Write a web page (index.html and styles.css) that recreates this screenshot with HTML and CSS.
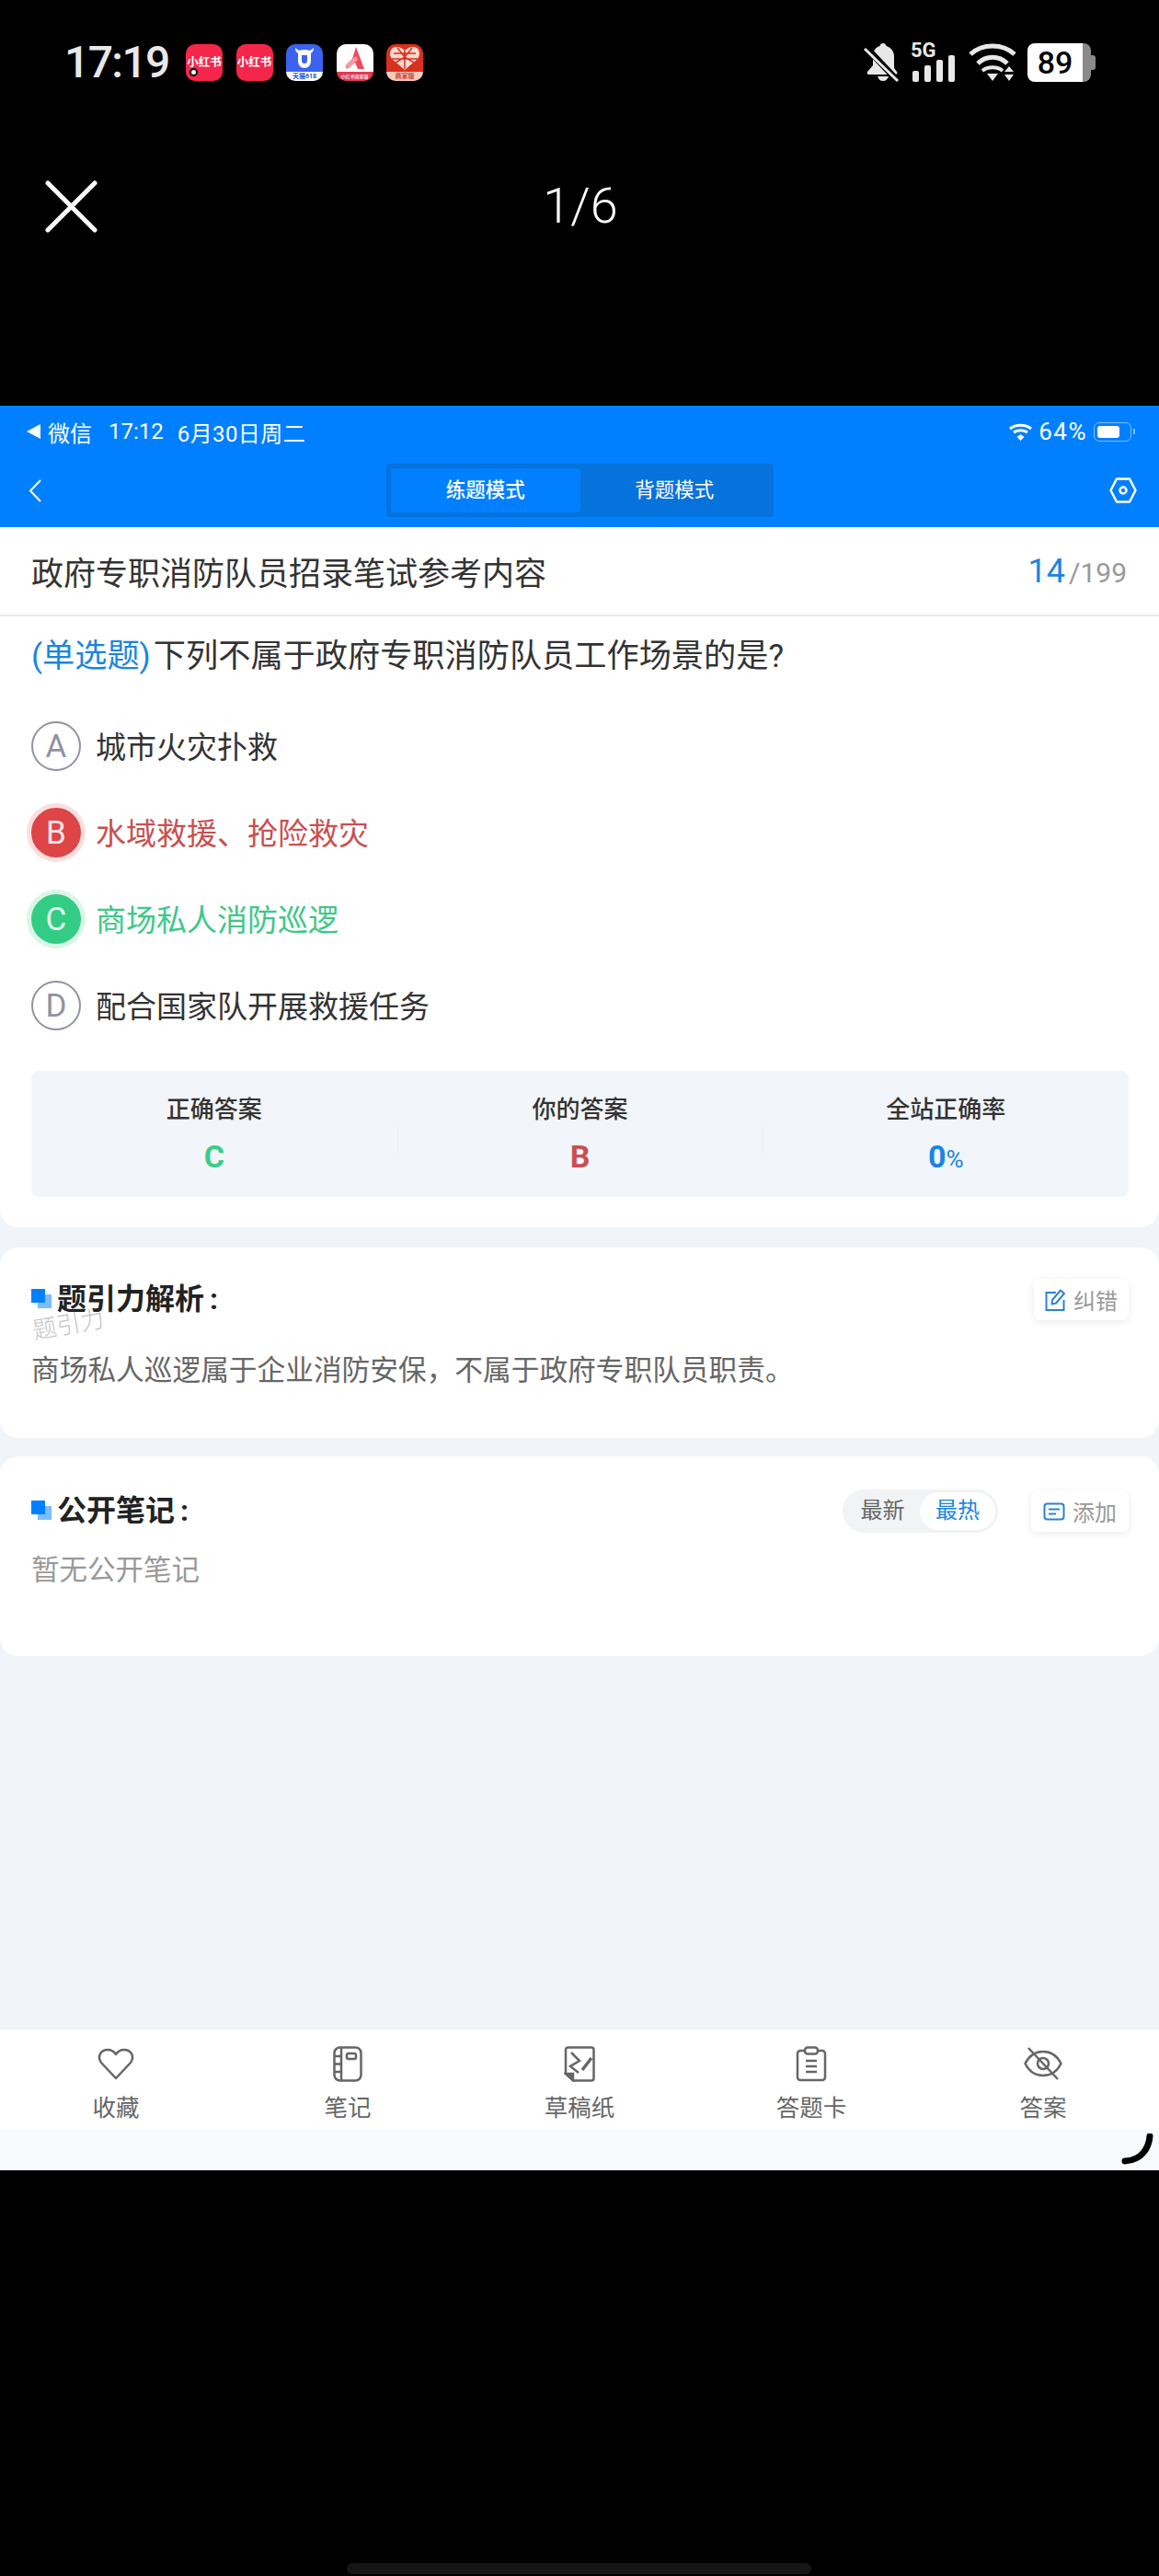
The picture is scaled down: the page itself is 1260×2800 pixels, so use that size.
FILE: index.html
```html
<!DOCTYPE html>
<html lang="zh-CN">
<head>
    <meta charset="UTF-8">
    <title>题引力</title>
    <link rel="stylesheet" href="styles.css">
</head>
<body>
    <div class="phone-status">
        <span class="phone-time">17:19</span>
        <div class="app-icons">
            <div class="app app-red"><span>小红书</span><i class="app-dot"></i></div>
            <div class="app app-red"><span>小红书</span></div>
            <div class="app app-blue">
                <svg width="40" height="30" viewBox="0 0 40 30"><path d="M10 4c0 4 2 5 3 6v8c0 5 3 8 7 8s7-3 7-8v-8c1-1 3-2 3-6-2 2-4 3-5 3-1-1-3-1-5-1s-4 0-5 1c-1 0-3-1-5-3z" fill="#fff"/><path d="M17 12h6v6c0 2-1 3-3 3s-3-1-3-3z" fill="#3b63f0"/></svg>
                <span>天猫618</span>
            </div>
            <div class="app app-white">
                <svg width="40" height="30" viewBox="0 0 40 30"><path d="M21 3l9 24h-7l-3-7-7 6c-2 1-4 0-3-3l7-7z" fill="#ef4a5c"/><path d="M10 22l11-9 2 4-9 8c-3 2-5 0-4-3z" fill="#f79aa2"/></svg>
                <span>小红书商家版</span>
            </div>
            <div class="app app-pdd">
                <svg width="40" height="30" viewBox="0 0 40 30"><path d="M20 28L6 16C2 11 4 3 11 3c4 0 7 2 9 4 2-2 5-4 9-4 7 0 9 8 5 13z" fill="#f9d9d2"/><path d="M20 7v20M8 10l24 0M6 16h28M12 4l8 10 8-10M10 20l10-6 10 6" stroke="#d8311c" stroke-width="1.5" fill="none"/></svg>
                <span>商家版</span>
            </div>
        </div>
        <div class="status-right">
            <svg class="icon-bell" width="39" height="42" viewBox="0 0 39 42">
                <path d="M21 0c-2 0-3 1-3.500 3C12 5 10 9 10 14v10l-6 7c-1 2 0 3 2 3h28c2 0 3-1 2-3l-3-4V14c0-5-3-9-8.500-11C24 1 23 0 21 0z" fill="#e8e8e8"/>
                <path d="M15 36h12c-1 3-3 5-6 5s-5-2-6-5z" fill="#e8e8e8"/>
                <path d="M2 4l35 37" stroke="#000" stroke-width="7"/>
                <path d="M1 6l36 35" stroke="#e8e8e8" stroke-width="3"/>
            </svg>
            <div class="signal">
                <span class="label-5g">5G</span>
                <svg width="50" height="29" viewBox="0 0 50 29">
                    <rect x="2" y="17" width="7" height="12" rx="2" fill="#e8e8e8"/>
                    <rect x="15" y="11" width="7" height="18" rx="2" fill="#e8e8e8"/>
                    <rect x="28" y="5" width="7" height="24" rx="2" fill="#e8e8e8"/>
                    <rect x="41" y="0" width="7" height="29" rx="2" fill="#e8e8e8"/>
                </svg>
            </div>
            <svg class="icon-wifi" width="53" height="42" viewBox="0 0 53 42" fill="none" stroke="#e8e8e8" stroke-width="5">
                <path d="M2 12C15 0 37 0 50 12"/>
                <path d="M10 22C19 13 33 13 42 22"/>
                <path d="M15 30c6-5 16-5 22 0" stroke-width="4"/>
                <path d="M20 33h12l-6 8z" fill="#e8e8e8" stroke="none"/>
                <path d="M44 25l5 6H39zM39 34h10l-5 7z" fill="#e8e8e8" stroke="none"/>
            </svg>
            <div class="batt">89</div>
        </div>
    </div>

    <div class="viewer-top">
        <svg width="57" height="57" viewBox="0 0 57 57"><path d="M3 3l51 51M54 3L3 54" stroke="#fff" stroke-width="5" stroke-linecap="round"/></svg>
        <span class="viewer-count">1/6</span>
        <span></span>
    </div>

    <div class="shot">
        <div class="shot-head">
            <div class="shot-status">
                <div class="shot-status-left">
                    <span class="back-tri"></span><span>微信</span><span class="ml-time">17:12</span><span class="ml-date">6月30日周二</span>
                </div>
                <div class="shot-status-right">
                    <svg width="25" height="20" viewBox="0 0 25 20" fill="none" stroke="#fff" stroke-width="3"><path d="M1 7c6-5 17-5 23 0"/><path d="M5 11c4-3 11-3 15 0"/><path d="M8.500 16l4-3 4 3-4 4z" fill="#fff" stroke="none"/></svg>
                    <span class="wifi-pct">64%</span>
                    <div class="mini-batt"><i></i></div>
                </div>
            </div>
            <div class="shot-nav">
                <svg width="15" height="25" viewBox="0 0 15 25"><path d="M13 1L2 12.500 13 24" stroke="#fff" stroke-width="2" fill="none"/></svg>
                <div class="mode-tabs">
                    <div class="mode-tab active">练题模式</div>
                    <div class="mode-tab">背题模式</div>
                </div>
                <svg width="30" height="28" viewBox="0 0 30 28" fill="none" stroke="#fff" stroke-width="2.500"><path d="M8 1.500h14L28.500 14 22 26.500H8L1.500 14z" stroke-linejoin="round"/><circle cx="15" cy="14" r="3.500"/></svg>
            </div>
        </div>

        <div class="title-row">
            <span class="paper-title">政府专职消防队员招录笔试参考内容</span>
            <span class="progress"><b>14</b>/199</span>
        </div>

        <div class="question-card">
            <p class="question"><span class="q-type">(单选题)</span>下列不属于政府专职消防队员工作场景的是?</p>
            <div class="option"><span class="opt-mark">A</span>城市火灾扑救</div>
            <div class="option wrong"><span class="opt-mark">B</span>水域救援、抢险救灾</div>
            <div class="option right"><span class="opt-mark">C</span>商场私人消防巡逻</div>
            <div class="option"><span class="opt-mark">D</span>配合国家队开展救援任务</div>
            <div class="stats">
                <div class="stat"><div class="stat-label">正确答案</div><div class="stat-value green">C</div></div>
                <div class="stat"><div class="stat-label">你的答案</div><div class="stat-value red">B</div></div>
                <div class="stat"><div class="stat-label">全站正确率</div><div class="stat-value blue">0<small>%</small></div></div>
            </div>
        </div>

        <div class="panel panel-analysis">
            <div class="panel-head">
                <h3 class="panel-title"><i class="mark"></i>题引力解析<span class="colon">:</span></h3>
                <div class="small-btn">
                    <svg width="23" height="24" viewBox="0 0 23 24" fill="none" stroke="#2b84d0" stroke-width="2"><path d="M12 4H1.500v19h19V12"/><path d="M8 12l9-10.500 4 3.500-9 10.500-4.500 1z" stroke-linejoin="round"/></svg>
                    <span>纠错</span>
                </div>
            </div>
            <span class="watermark">题引力</span>
            <p class="panel-text">商场私人巡逻属于企业消防安保，不属于政府专职队员职责。</p>
        </div>

        <div class="panel panel-notes">
            <div class="panel-head">
                <h3 class="panel-title"><i class="mark"></i>公开笔记<span class="colon">:</span></h3>
                <div class="head-right">
                    <div class="sort-toggle">
                        <span class="sort-item">最新</span>
                        <span class="sort-item active">最热</span>
                    </div>
                    <div class="small-btn">
                        <svg width="24" height="20" viewBox="0 0 24 20" fill="none" stroke="#2b84d0" stroke-width="2"><rect x="1.500" y="1.500" width="21" height="17" rx="3"/><path d="M6 7.500h12M6 12.500h8"/></svg>
                        <span>添加</span>
                    </div>
                </div>
            </div>
            <p class="panel-text empty">暂无公开笔记</p>
        </div>

        <div class="spacer"></div>

        <div class="tabbar">
            <div class="tab-item">
                <div class="tab-icon"><svg width="40" height="35" viewBox="0 0 40 35" fill="none" stroke="#666" stroke-width="2.500"><path d="M20 33L4 16C-1 9 4 2 11 2c4 0 7 2 9 5 2-3 5-5 9-5 7 0 12 7 7 14z" stroke-linejoin="round"/></svg></div>
                <span>收藏</span>
            </div>
            <div class="tab-item">
                <div class="tab-icon"><svg width="32" height="39" viewBox="0 0 32 39" fill="none" stroke="#666" stroke-width="2.500"><rect x="1.500" y="1.500" width="29" height="36" rx="6"/><path d="M9 1.500v36M1.500 11H9M1.500 19.500H9M1.500 28H9"/><rect x="15" y="8" width="10" height="6" rx="2"/></svg></div>
                <span>笔记</span>
            </div>
            <div class="tab-item">
                <div class="tab-icon"><svg width="34" height="39" viewBox="0 0 34 39" fill="none" stroke="#666" stroke-width="2.500"><path d="M5 1.500h25a2.500 2.500 0 0 1 2.500 2.500v31a2.500 2.500 0 0 1-2.500 2.500H10l-8-7.500V4a2.500 2.500 0 0 1 3-2.500z"/><path d="M8 7l9 9-10 6 9 7"/><path d="M30 13L20 26" stroke-width="3.500"/><path d="M2 30h8v7z" fill="#666"/></svg></div>
                <span>草稿纸</span>
            </div>
            <div class="tab-item">
                <div class="tab-icon"><svg width="34" height="39" viewBox="0 0 34 39" fill="none" stroke="#666" stroke-width="2.500"><path d="M9 5H5a3 3 0 0 0-3 3v26a3 3 0 0 0 3 3h24a3 3 0 0 0 3-3V8a3 3 0 0 0-3-3h-4"/><rect x="10" y="1.500" width="14" height="7" rx="3"/><path d="M11 16h12M11 22h12M11 28h12"/></svg></div>
                <span>答题卡</span>
            </div>
            <div class="tab-item">
                <div class="tab-icon"><svg width="42" height="36" viewBox="0 0 42 36" fill="none" stroke="#666" stroke-width="2.500"><path d="M1.500 18C6 9 13 5 21 5s15 4 19.500 13C36 27 29 31 21 31S6 27 1.500 18z" stroke-linejoin="round"/><circle cx="21" cy="18" r="6"/><path d="M5 1l32 34"/></svg></div>
                <span>答案</span>
            </div>
        </div>
        <div class="home-strip">
            <svg class="pen-mark" width="36" height="34" viewBox="0 0 36 34"><path d="M31 3c-1 12-8 26-27 27" fill="none" stroke="#000" stroke-width="7" stroke-linecap="round"/></svg>
        </div>
    </div>

    <div class="home-indicator"></div>
</body>
</html>
```

FILE: styles.css
```css
* {
    box-sizing: border-box;
}

body {
    margin: 0;
    height: 2800px;
    overflow: hidden;
    background-color: #000;
    font-family: Roboto, "Noto Sans CJK SC", sans-serif;
}

p, h3 {
    margin: 0;
}

/* phone status bar */
.phone-status {
    height: 140px;
    padding: 47px 0 0 70px;
    display: flex;
    align-items: flex-start;
    color: #e8e8e8;
}

.phone-time {
    width: 132px;
    font-size: 48px;
    line-height: 42px;
    font-weight: 500;
    letter-spacing: -1.6px;
}

.app-icons {
    display: flex;
    gap: 14.500px;
    margin-top: 1px;
}

.app {
    position: relative;
    width: 40px;
    height: 40px;
    border-radius: 10px;
    overflow: hidden;
    display: flex;
    flex-direction: column;
    align-items: center;
    font-weight: 700;
}

.app svg {
    display: block;
    flex: none;
}

.app span {
    font-size: 7px;
    line-height: 10px;
    white-space: nowrap;
}

.app-red {
    background-color: #f5264a;
    color: #fff;
    justify-content: center;
}

.app-red span {
    font-size: 12.500px;
    line-height: 14px;
}

.app-dot {
    position: absolute;
    left: 4px;
    bottom: 5px;
    width: 9px;
    height: 9px;
    border-radius: 50%;
    background-color: #fff;
    border: 2.500px solid #111;
}

.app-blue {
    background: linear-gradient(#3b63f0 30px, #fff 30px);
    color: #2a50d8;
}

.app-white {
    background: linear-gradient(#fff 30px, #e03a4e 30px);
    color: #fde;
}

.app-white span {
    font-size: 5px;
}

.app-pdd {
    background: linear-gradient(#d8311c 30px, #f9c9bd 30px);
    color: #c8402c;
}

.status-right {
    position: absolute;
    top: 47px;
    left: 939px;
    display: flex;
    align-items: flex-start;
}

.icon-bell {
    margin-right: 12px;
}

.signal {
    width: 50px;
    height: 42px;
    margin-right: 13px;
    display: flex;
    flex-direction: column;
}

.signal svg {
    display: block;
    margin-top: -3px;
}

.label-5g {
    height: 16px;
    font-size: 22px;
    font-weight: 700;
    line-height: 16px;
    color: #e8e8e8;
}

.icon-wifi {
    margin-right: 11px;
}

.batt {
    position: relative;
    width: 69px;
    height: 42px;
    padding-right: 9px;
    border-radius: 8px;
    background: linear-gradient(90deg, #fff 60px, #8a8a8a 60px);
    color: #000;
    font-size: 34px;
    font-weight: 500;
    line-height: 42px;
    text-align: center;
}

.batt::after {
    content: "";
    position: absolute;
    right: -5px;
    top: 13px;
    width: 5px;
    height: 16px;
    border-radius: 0 3px 3px 0;
    background-color: #8a8a8a;
}

/* photo viewer top */
.viewer-top {
    height: 301px;
    padding: 56px 49px 0;
    display: grid;
    grid-template-columns: 1fr auto 1fr;
    align-items: start;
}

.viewer-count {
    margin-top: -5px;
    margin-left: 2px;
    color: #fff;
    font-size: 54px;
    font-weight: 300;
    line-height: 66px;
}

/* screenshot */
.shot {
    height: 1918px;
    display: flex;
    flex-direction: column;
    background-color: #f1f5f9;
    color: #333;
}

.shot-head {
    height: 132px;
    background-color: #0080ff;
    color: #fff;
}

.shot-status {
    height: 56px;
    padding: 0 30px 0 29px;
    display: flex;
    justify-content: space-between;
    align-items: center;
    font-size: 24px;
}

.shot-status-left,
.shot-status-right {
    display: flex;
    align-items: center;
}

.back-tri {
    width: 0;
    height: 0;
    margin-right: 8px;
    border-top: 8px solid transparent;
    border-bottom: 8px solid transparent;
    border-right: 15px solid #fff;
}

.ml-time {
    margin-left: 18px;
}

.ml-date {
    margin-left: 15px;
    letter-spacing: 0.4px;
}

.shot-status-right svg {
    margin-right: 7px;
}

.wifi-pct {
    font-size: 26px;
    letter-spacing: 1.500px;
}

.mini-batt {
    position: relative;
    width: 41px;
    height: 21px;
    margin-left: 7px;
    padding: 3px;
    border: 1.500px solid #7dbcff;
    border-radius: 6px;
}

.mini-batt::after {
    content: "";
    position: absolute;
    right: -5px;
    top: 6px;
    width: 2px;
    height: 6px;
    background-color: #7dbcff;
}

.mini-batt i {
    display: block;
    width: 24px;
    height: 100%;
    border-radius: 3px;
    background-color: #fff;
}

.shot-nav {
    height: 76px;
    padding: 0 24px 4px 31px;
    display: flex;
    justify-content: space-between;
    align-items: center;
}

.mode-tabs {
    width: 421px;
    height: 58px;
    margin-left: 9px;
    padding: 5px;
    display: flex;
    border-radius: 4px;
    background-color: #0672dc;
}

.mode-tab {
    flex: 1;
    border-radius: 4px;
    font-size: 21.500px;
    line-height: 48px;
    text-align: center;
}

.mode-tab.active {
    background-color: #0080ff;
    font-weight: 500;
}

.title-row {
    height: 97px;
    padding: 0 35px 0 34px;
    display: flex;
    justify-content: space-between;
    align-items: center;
    background-color: #fff;
    border-bottom: 2px solid #e9e9e9;
}

.paper-title {
    font-size: 35px;
    color: #333;
}

.progress {
    font-size: 30px;
    color: #999;
}

.progress b {
    margin-right: 4px;
    font-size: 36px;
    font-weight: 400;
    color: #1a85e0;
}

.question-card {
    padding: 21px 33px 33px 34px;
    background-color: #fff;
    border-radius: 0 0 20px 20px;
}

.question {
    margin-bottom: 29px;
    font-size: 35.200px;
    line-height: 44px;
    color: #333;
}

.q-type {
    margin-right: 3px;
    color: #1a85e0;
}

.option {
    height: 94px;
    padding-bottom: 3px;
    display: flex;
    align-items: center;
    font-size: 33px;
    color: #333;
}

.opt-mark {
    width: 54px;
    height: 54px;
    margin-top: 3px;
    margin-right: 16px;
    display: flex;
    justify-content: center;
    align-items: center;
    border: 2px solid #8f92a3;
    border-radius: 50%;
    color: #8f92a3;
    font-size: 35px;
    font-weight: 400;
}

.wrong {
    color: #c94f50;
}

.wrong .opt-mark {
    border-color: #dd4547;
    background-color: #dd4547;
    color: #fbe6e6;
    box-shadow: 0 0 0 5px #fbdfe0;
}

.right {
    color: #3cc886;
}

.right .opt-mark {
    border-color: #33cc85;
    background-color: #33cc85;
    color: #e6f9ef;
    box-shadow: 0 0 0 5px #d9f6e7;
}

.stats {
    height: 137px;
    margin-top: 24px;
    padding-top: 24px;
    display: grid;
    grid-template-columns: repeat(3, 1fr);
    border-radius: 8px;
    background-color: #f2f5f9;
    text-align: center;
}

.stat {
    position: relative;
}

.stat + .stat::before {
    content: "";
    position: absolute;
    left: 0;
    top: 35px;
    width: 1px;
    height: 32px;
    background-color: #ecf0f4;
}

.stat-label {
    font-size: 26px;
    font-weight: 500;
    line-height: 36px;
    color: #333;
}

.stat-value {
    margin-top: 14px;
    font-size: 34px;
    font-weight: 700;
    line-height: 38px;
}

.stat-value small {
    font-size: 26px;
    font-weight: 400;
}

.green {
    color: #3ccc88;
}

.red {
    color: #c94f50;
}

.blue {
    color: #1a85e5;
}

.panel {
    position: relative;
    margin-top: 22px;
    padding: 34px 33px 0 34px;
    background-color: #fff;
    border-radius: 20px;
}

.panel-analysis {
    height: 207px;
}

.panel-notes {
    height: 217px;
    margin-top: 20px;
    padding-top: 36px;
}

.panel-head {
    display: flex;
    justify-content: space-between;
    align-items: center;
}

.panel-title {
    display: flex;
    align-items: center;
    font-size: 32px;
    font-weight: 700;
    line-height: 45px;
    color: #222;
}

.colon {
    margin-left: 6px;
}

.mark {
    position: relative;
    width: 22px;
    height: 21px;
    margin-right: 6px;
    margin-top: -2px;
}

.mark::before,
.mark::after {
    content: "";
    position: absolute;
    width: 15px;
    height: 15px;
}

.mark::before {
    right: 0;
    bottom: 0;
    background-color: #7dbdfd;
}

.mark::after {
    left: 0;
    top: 0;
    background-color: #0080ff;
}

.small-btn {
    width: 103px;
    height: 45px;
    display: flex;
    justify-content: center;
    align-items: center;
    gap: 8px;
    border-radius: 6px;
    background-color: #fff;
    box-shadow: 0 2px 8px rgba(0, 0, 0, 0.08);
    font-size: 24px;
    color: #999;
}

.head-right .small-btn {
    width: 106px;
}

.watermark {
    position: absolute;
    left: 35px;
    top: 63px;
    font-size: 26px;
    font-weight: 300;
    color: #c4c4c4;
    transform: rotate(-10deg);
}

.panel-text {
    margin-top: 35px;
    font-size: 30.700px;
    line-height: 40px;
    color: #666;
}

.panel-text.empty {
    margin-top: 21px;
    font-size: 30.500px;
    color: #999;
}

.head-right {
    display: flex;
    align-items: center;
    gap: 36px;
}

.sort-toggle {
    width: 169px;
    height: 47px;
    padding: 3px;
    display: flex;
    border-radius: 24px;
    background-color: #f1f3f5;
    font-size: 24px;
    line-height: 41px;
    text-align: center;
    color: #666;
}

.sort-item {
    flex: 1;
}

.sort-item.active {
    flex: none;
    width: 82px;
    border-radius: 21px;
    background-color: #fff;
    color: #1a85e0;
}

.spacer {
    flex: 1;
}

.tabbar {
    height: 111px;
    padding-top: 16px;
    display: grid;
    grid-template-columns: repeat(5, 1fr);
    background-color: #fff;
    border-top: 2px solid #eef1f3;
}

.tab-item {
    display: flex;
    flex-direction: column;
    align-items: center;
    font-size: 25.500px;
    color: #666;
}

.tab-icon {
    height: 42px;
    margin-bottom: 12px;
    display: flex;
    align-items: center;
}

.tab-item span {
    line-height: 30px;
}

.home-strip {
    position: relative;
    height: 44px;
    background-color: #f8f9fa;
}

.pen-mark {
    position: absolute;
    left: 1219px;
    top: 4px;
}

.home-indicator {
    width: 505px;
    height: 12px;
    margin: 427px 0 0 377px;
    border-radius: 6px;
    background-color: #161616;
}
```
